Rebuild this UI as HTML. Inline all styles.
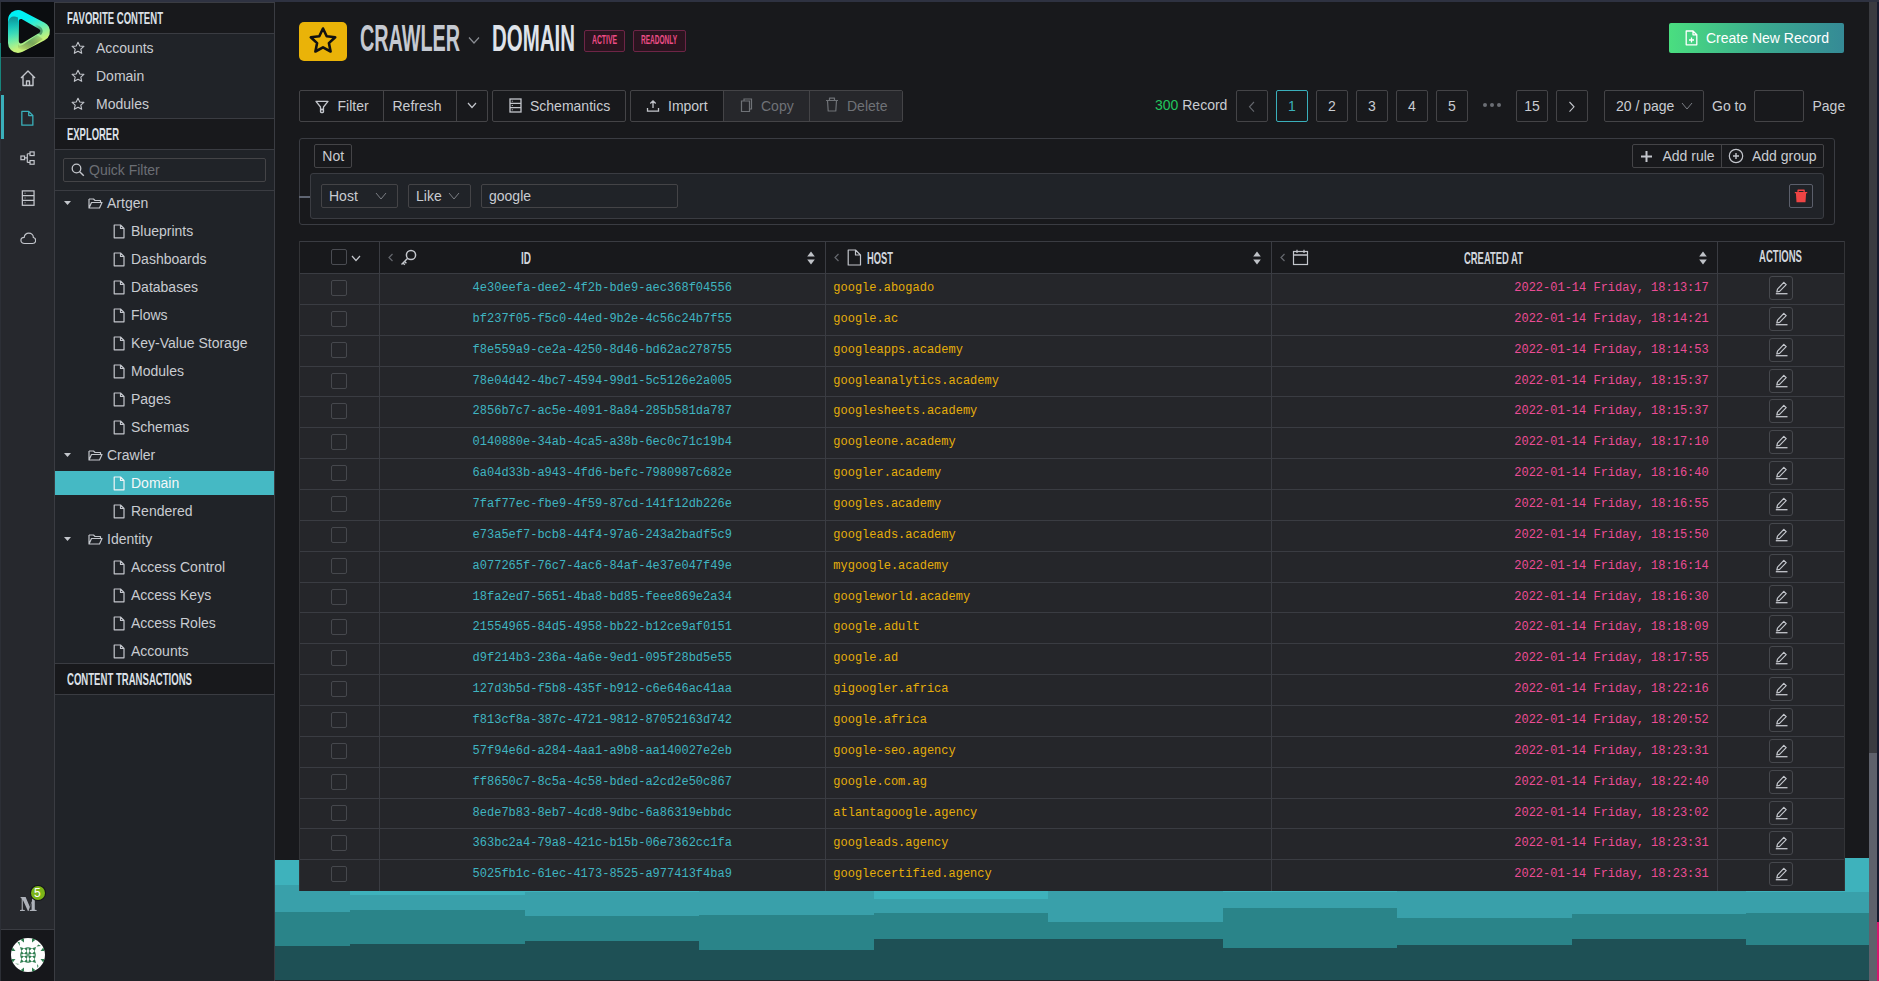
<!DOCTYPE html>
<html><head><meta charset="utf-8"><style>
html,body{margin:0;padding:0;}
body{width:1879px;height:981px;overflow:hidden;position:relative;background:#18191c;font-family:"Liberation Sans",sans-serif;}
.r{position:absolute;box-sizing:content-box;}
.t{position:absolute;white-space:nowrap;}
</style></head><body>
<div class="r" style="left:0px;top:0px;width:1879px;height:2px;background:#2e3241"></div>
<div class="r" style="left:0px;top:2px;width:54px;height:979px;background:#26282d"></div>
<div class="r" style="left:0px;top:2px;width:1px;height:979px;background:#2c2f36"></div>
<div class="r" style="left:0px;top:43px;width:1px;height:48px;background:#17857c"></div>
<div class="r" style="left:54px;top:2px;width:1px;height:979px;background:#3a3c42"></div>
<div class="r" style="left:1px;top:2px;width:53px;height:55px;background:#0b0d10"></div>
<div class="r" style="left:1px;top:57px;width:53px;height:1px;background:#3a3c42"></div>
<div class="r" style="left:1px;top:95px;width:3px;height:44px;background:#3ab0bb"></div>
<div class="r" style="left:1px;top:929px;width:53px;height:1px;background:#3a3c42"></div>
<div class="r" style="left:1px;top:930px;width:53px;height:51px;background:#16171b"></div>
<svg class="r" style="left:1px;top:2px;" width="53" height="55" viewBox="0 0 53 55" fill="none">
<defs>
<linearGradient id="lgA" x1="0.25" y1="0" x2="0.65" y2="1">
<stop offset="0" stop-color="#00f0f4"/><stop offset="0.5" stop-color="#62eeb4"/><stop offset="1" stop-color="#c6f27a"/></linearGradient>
<linearGradient id="lgL" x1="0" y1="0" x2="0" y2="1">
<stop offset="0" stop-color="#0e7f86" stop-opacity="0.9"/><stop offset="0.6" stop-color="#2fb59a" stop-opacity="0.35"/><stop offset="1" stop-color="#60e0a0" stop-opacity="0"/></linearGradient>
<linearGradient id="lgT" x1="0" y1="0" x2="1" y2="0.6">
<stop offset="0" stop-color="#000" stop-opacity="0"/><stop offset="0.55" stop-color="#000" stop-opacity="0"/><stop offset="1" stop-color="#1d5a48" stop-opacity="0.55"/></linearGradient>
<linearGradient id="lgB" x1="1" y1="0" x2="0" y2="1">
<stop offset="0" stop-color="#000" stop-opacity="0"/><stop offset="0.5" stop-color="#2b5e3a" stop-opacity="0.5"/><stop offset="1" stop-color="#000" stop-opacity="0"/></linearGradient>
</defs>
<path d="M17 18 L17 41 L39 29.5 Z" fill="url(#lgA)" stroke="url(#lgA)" stroke-width="20" stroke-linejoin="round"/>
<path d="M7 20 C 8 15 12 13 17 15.5 L17 43 C 12 44 8 42 7 37 Z" fill="url(#lgL)"/>
<path d="M25 17 L38 24 C 42 26 43 30 40 33 L 36 31 C 38 28 36 26 33 25 Z" fill="url(#lgT)"/>
<path d="M36 33 L23 42 C 20 44 17 45 17 41 L 17 46 C 20 49 25 48 30 45 L 42 37 Z" fill="url(#lgB)"/>
<path d="M17.8 19.5 C 17.8 17.3 19.5 16.5 21.5 17.5 L38 27 C 39.8 28 39.8 30 38 31 L21.5 41 C 19.5 42 17.8 41.2 17.8 39 Z" fill="#0b0d10"/>
</svg>
<svg class="r" style="left:19px;top:69px;" width="18" height="18" viewBox="0 0 18 18" fill="none"><path d="M2 9 L9 2 L16 9 M4 7.5 V16.5 H14 V7.5 M7.5 16.5 V12 H10.5 V16.5" stroke="#c3c6cc" stroke-width="1.4" stroke-linejoin="round"/></svg>
<svg class="r" style="left:20.4px;top:109.6px;" width="14.7" height="16.6" viewBox="0 0 16 18" fill="none"><path d="M2 1.5 H9.5 L14 6 V16.5 H2 Z M9.5 1.5 V6 H14" stroke="#3ab0bb" stroke-width="1.4" stroke-linejoin="round"/></svg>
<svg class="r" style="left:20.1px;top:151.1px;" width="15.5" height="14.6" viewBox="0 0 17 16" fill="none"><rect x="1" y="5.5" width="4" height="4" stroke="#c3c6cc" stroke-width="1.3"/><rect x="11" y="1" width="4.5" height="4" stroke="#c3c6cc" stroke-width="1.3"/><rect x="11" y="10.5" width="4.5" height="4" stroke="#c3c6cc" stroke-width="1.3"/><path d="M5 7.5 H8 M8 3 V12.5 M8 3 H11 M8 12.5 H11" stroke="#c3c6cc" stroke-width="1.3"/></svg>
<svg class="r" style="left:20.7px;top:189.7px;" width="14.4" height="16.2" viewBox="0 0 16 18" fill="none"><rect x="1.5" y="1" width="13" height="16" stroke="#c3c6cc" stroke-width="1.4"/><path d="M1.5 6.3 H14.5 M1.5 11.6 H14.5" stroke="#c3c6cc" stroke-width="1.4"/><path d="M4 3.6 H5 M4 8.9 H5 M4 14.2 H5" stroke="#c3c6cc" stroke-width="1"/></svg>
<svg class="r" style="left:19.5px;top:232px;" width="16.6" height="12.9" viewBox="0 0 18 14" fill="none"><path d="M5 12.5 C 2.5 12.5 1 11 1 9 C 1 7 2.5 5.8 4.5 5.8 C 5 3 7 1.3 9.5 1.3 C 12.5 1.3 14.5 3.5 14.5 6 C 16 6.3 17 7.5 17 9.2 C 17 11.2 15.5 12.5 13.5 12.5 Z" stroke="#c3c6cc" stroke-width="1.3"/></svg>
<svg class="r" style="left:19.5px;top:896.5px;" width="17" height="14" viewBox="0 0 17 14" fill="none"><path d="M0.6 0 H5.6 L10 10.2 L12 4 V0 H16.2 V1.1 L14.8 1.3 V12.7 L16.6 12.9 V14 H9.8 V12.9 L11.6 12.7 V4.5 L8.6 14 H7.9 L2.8 2.8 V12.7 L4.8 12.9 V14 H0 V12.9 L1.7 12.7 V1.5 L0.6 1.1 Z" fill="#aeb2ba"/></svg>
<div class="r" style="left:30.6px;top:885.5px;width:14.5px;height:14.5px;border-radius:50%;background:#7cb518;box-shadow:0 0 0 1px #15161a;color:#fff;font-size:12px;line-height:14px;text-align:center;"><span style="position:relative;left:-0.6px;top:0.2px">5</span></div>
<svg class="r" style="left:8px;top:935px;" width="40" height="40" viewBox="0 0 40 40" fill="none">
<defs><clipPath id="avc"><circle cx="20" cy="20" r="17"/></clipPath></defs>
<circle cx="20" cy="20" r="17" fill="#fdfdfd"/>
<g clip-path="url(#avc)" fill="#2e7d4f"><path d="M12 12 L16 13.2 L13.2 16 Z M20 12 L16 13.2 L18.8 16 Z M12 20 L16 18.8 L13.2 16 Z M20 20 L16 18.8 L18.8 16 Z M20 12 L24 13.2 L21.2 16 Z M28 12 L24 13.2 L26.8 16 Z M20 20 L24 18.8 L21.2 16 Z M28 20 L24 18.8 L26.8 16 Z M12 20 L16 21.2 L13.2 24 Z M20 20 L16 21.2 L18.8 24 Z M12 28 L16 26.8 L13.2 24 Z M20 28 L16 26.8 L18.8 24 Z M20 20 L24 21.2 L21.2 24 Z M28 20 L24 21.2 L26.8 24 Z M20 28 L24 26.8 L21.2 24 Z M28 28 L24 26.8 L26.8 24 Z M9 2 L16 2 L16 7.5 Z M24 2 L31 2 L24 7.5 Z M9 38 L16 38 L16 32.5 Z M24 38 L31 38 L24 32.5 Z M2 9 L2 16 L7.5 16 Z M2 24 L2 31 L7.5 24 Z M38 9 L38 16 L32.5 16 Z M38 24 L38 31 L32.5 24 Z M9.5 7 L11.5 7 L12 11 Z M30.5 9.5 L33 11 L28.5 11.5 Z M7 28.5 L9.5 29.5 L11.5 29 Z M29 29 L29.5 33 L30.5 31 Z"/></g>
</svg>
<div class="r" style="left:55px;top:2px;width:219px;height:979px;background:#202328"></div>
<div class="r" style="left:274px;top:2px;width:1px;height:979px;background:#3a3c42"></div>
<div class="r" style="left:55px;top:2px;width:219px;height:31px;background:#18191c"></div>
<div class="r" style="left:55px;top:2px;width:219px;height:1px;background:#3a3c42"></div>
<div class="r" style="left:55px;top:33px;width:219px;height:1px;background:#3a3c42"></div>
<div class="t" style="left:67px;top:9.61px;font-size:17px;line-height:17px;color:#dde1e8;font-weight:bold;transform:scaleX(0.5625);transform-origin:0 0;">FAVORITE CONTENT</div>
<svg class="r" style="left:71px;top:41px;" width="14" height="14" viewBox="0 0 14 14" fill="none"><path d="M7 1.2 L8.8 5 L12.9 5.4 L9.8 8.2 L10.7 12.3 L7 10.2 L3.3 12.3 L4.2 8.2 L1.1 5.4 L5.2 5 Z" stroke="#c3c6cc" stroke-width="1.1" stroke-linejoin="round"/></svg>
<div class="t" style="left:96px;top:41.15px;font-size:14px;line-height:14px;color:#c9ccd1;font-family:'Liberation Sans',sans-serif;font-weight:normal;">Accounts</div>
<svg class="r" style="left:71px;top:69px;" width="14" height="14" viewBox="0 0 14 14" fill="none"><path d="M7 1.2 L8.8 5 L12.9 5.4 L9.8 8.2 L10.7 12.3 L7 10.2 L3.3 12.3 L4.2 8.2 L1.1 5.4 L5.2 5 Z" stroke="#c3c6cc" stroke-width="1.1" stroke-linejoin="round"/></svg>
<div class="t" style="left:96px;top:69.15px;font-size:14px;line-height:14px;color:#c9ccd1;font-family:'Liberation Sans',sans-serif;font-weight:normal;">Domain</div>
<svg class="r" style="left:71px;top:97px;" width="14" height="14" viewBox="0 0 14 14" fill="none"><path d="M7 1.2 L8.8 5 L12.9 5.4 L9.8 8.2 L10.7 12.3 L7 10.2 L3.3 12.3 L4.2 8.2 L1.1 5.4 L5.2 5 Z" stroke="#c3c6cc" stroke-width="1.1" stroke-linejoin="round"/></svg>
<div class="t" style="left:96px;top:97.15px;font-size:14px;line-height:14px;color:#c9ccd1;font-family:'Liberation Sans',sans-serif;font-weight:normal;">Modules</div>
<div class="r" style="left:55px;top:118px;width:219px;height:1px;background:#3a3c42"></div>
<div class="r" style="left:55px;top:119px;width:219px;height:30px;background:#18191c"></div>
<div class="r" style="left:55px;top:149px;width:219px;height:1px;background:#3a3c42"></div>
<div class="t" style="left:67px;top:125.61px;font-size:17px;line-height:17px;color:#dde1e8;font-weight:bold;transform:scaleX(0.5559);transform-origin:0 0;">EXPLORER</div>
<div class="r" style="left:63px;top:158px;width:201px;height:22px;border:1px solid #444447;border-radius:2px;background:#202328"></div>
<svg class="r" style="left:71px;top:163px;" width="14" height="14" viewBox="0 0 14 14" fill="none"><circle cx="5.5" cy="5.5" r="4.3" stroke="#c3c6cc" stroke-width="1.3"/><path d="M8.7 8.7 L12.8 12.8" stroke="#c3c6cc" stroke-width="1.4"/></svg>
<div class="t" style="left:89px;top:163.15px;font-size:14px;line-height:14px;color:#6b6e74;font-family:'Liberation Sans',sans-serif;font-weight:normal;">Quick Filter</div>
<div class="r" style="left:55px;top:190px;width:219px;height:1px;background:#3a3c42"></div>
<svg class="r" style="left:63.6px;top:200.7px;" width="7" height="4" viewBox="0 0 7 4" fill="none"><path d="M0 0 H7 L3.5 4 Z" fill="#c3c6cc"/></svg>
<svg class="r" style="left:87.5px;top:197px;" width="15" height="12" viewBox="0 0 15 12" fill="none"><path d="M1 2 H5.5 L7 3.5 H12.5 V5.5 M1 2 V11 H11.5 L14 5.5 H3.5 L1 11" stroke="#c3c6cc" stroke-width="1.2" stroke-linejoin="round"/></svg>
<div class="t" style="left:107px;top:196.15px;font-size:14px;line-height:14px;color:#c9ccd1;font-family:'Liberation Sans',sans-serif;font-weight:normal;">Artgen</div>
<svg class="r" style="left:113px;top:224px;" width="12" height="15" viewBox="0 0 12 15" fill="none"><path d="M1.2 1 H7.5 L11 4.5 V13.8 H1.2 Z M7.5 1 V4.5 H11" stroke="#c3c6cc" stroke-width="1.2" stroke-linejoin="round"/></svg>
<div class="t" style="left:131px;top:224.15px;font-size:14px;line-height:14px;color:#c9ccd1;font-family:'Liberation Sans',sans-serif;font-weight:normal;">Blueprints</div>
<svg class="r" style="left:113px;top:252px;" width="12" height="15" viewBox="0 0 12 15" fill="none"><path d="M1.2 1 H7.5 L11 4.5 V13.8 H1.2 Z M7.5 1 V4.5 H11" stroke="#c3c6cc" stroke-width="1.2" stroke-linejoin="round"/></svg>
<div class="t" style="left:131px;top:252.15px;font-size:14px;line-height:14px;color:#c9ccd1;font-family:'Liberation Sans',sans-serif;font-weight:normal;">Dashboards</div>
<svg class="r" style="left:113px;top:280px;" width="12" height="15" viewBox="0 0 12 15" fill="none"><path d="M1.2 1 H7.5 L11 4.5 V13.8 H1.2 Z M7.5 1 V4.5 H11" stroke="#c3c6cc" stroke-width="1.2" stroke-linejoin="round"/></svg>
<div class="t" style="left:131px;top:280.15px;font-size:14px;line-height:14px;color:#c9ccd1;font-family:'Liberation Sans',sans-serif;font-weight:normal;">Databases</div>
<svg class="r" style="left:113px;top:308px;" width="12" height="15" viewBox="0 0 12 15" fill="none"><path d="M1.2 1 H7.5 L11 4.5 V13.8 H1.2 Z M7.5 1 V4.5 H11" stroke="#c3c6cc" stroke-width="1.2" stroke-linejoin="round"/></svg>
<div class="t" style="left:131px;top:308.15px;font-size:14px;line-height:14px;color:#c9ccd1;font-family:'Liberation Sans',sans-serif;font-weight:normal;">Flows</div>
<svg class="r" style="left:113px;top:336px;" width="12" height="15" viewBox="0 0 12 15" fill="none"><path d="M1.2 1 H7.5 L11 4.5 V13.8 H1.2 Z M7.5 1 V4.5 H11" stroke="#c3c6cc" stroke-width="1.2" stroke-linejoin="round"/></svg>
<div class="t" style="left:131px;top:336.15px;font-size:14px;line-height:14px;color:#c9ccd1;font-family:'Liberation Sans',sans-serif;font-weight:normal;">Key-Value Storage</div>
<svg class="r" style="left:113px;top:364px;" width="12" height="15" viewBox="0 0 12 15" fill="none"><path d="M1.2 1 H7.5 L11 4.5 V13.8 H1.2 Z M7.5 1 V4.5 H11" stroke="#c3c6cc" stroke-width="1.2" stroke-linejoin="round"/></svg>
<div class="t" style="left:131px;top:364.15px;font-size:14px;line-height:14px;color:#c9ccd1;font-family:'Liberation Sans',sans-serif;font-weight:normal;">Modules</div>
<svg class="r" style="left:113px;top:392px;" width="12" height="15" viewBox="0 0 12 15" fill="none"><path d="M1.2 1 H7.5 L11 4.5 V13.8 H1.2 Z M7.5 1 V4.5 H11" stroke="#c3c6cc" stroke-width="1.2" stroke-linejoin="round"/></svg>
<div class="t" style="left:131px;top:392.15px;font-size:14px;line-height:14px;color:#c9ccd1;font-family:'Liberation Sans',sans-serif;font-weight:normal;">Pages</div>
<svg class="r" style="left:113px;top:420px;" width="12" height="15" viewBox="0 0 12 15" fill="none"><path d="M1.2 1 H7.5 L11 4.5 V13.8 H1.2 Z M7.5 1 V4.5 H11" stroke="#c3c6cc" stroke-width="1.2" stroke-linejoin="round"/></svg>
<div class="t" style="left:131px;top:420.15px;font-size:14px;line-height:14px;color:#c9ccd1;font-family:'Liberation Sans',sans-serif;font-weight:normal;">Schemas</div>
<svg class="r" style="left:63.6px;top:452.7px;" width="7" height="4" viewBox="0 0 7 4" fill="none"><path d="M0 0 H7 L3.5 4 Z" fill="#c3c6cc"/></svg>
<svg class="r" style="left:87.5px;top:449px;" width="15" height="12" viewBox="0 0 15 12" fill="none"><path d="M1 2 H5.5 L7 3.5 H12.5 V5.5 M1 2 V11 H11.5 L14 5.5 H3.5 L1 11" stroke="#c3c6cc" stroke-width="1.2" stroke-linejoin="round"/></svg>
<div class="t" style="left:107px;top:448.15px;font-size:14px;line-height:14px;color:#c9ccd1;font-family:'Liberation Sans',sans-serif;font-weight:normal;">Crawler</div>
<div class="r" style="left:55px;top:471px;width:219px;height:24px;background:#45b9c4"></div>
<svg class="r" style="left:113px;top:476px;" width="12" height="15" viewBox="0 0 12 15" fill="none"><path d="M1.2 1 H7.5 L11 4.5 V13.8 H1.2 Z M7.5 1 V4.5 H11" stroke="#f2f5f6" stroke-width="1.2" stroke-linejoin="round"/></svg>
<div class="t" style="left:131px;top:476.15px;font-size:14px;line-height:14px;color:#f4f7f8;font-family:'Liberation Sans',sans-serif;font-weight:normal;">Domain</div>
<svg class="r" style="left:113px;top:504px;" width="12" height="15" viewBox="0 0 12 15" fill="none"><path d="M1.2 1 H7.5 L11 4.5 V13.8 H1.2 Z M7.5 1 V4.5 H11" stroke="#c3c6cc" stroke-width="1.2" stroke-linejoin="round"/></svg>
<div class="t" style="left:131px;top:504.15px;font-size:14px;line-height:14px;color:#c9ccd1;font-family:'Liberation Sans',sans-serif;font-weight:normal;">Rendered</div>
<svg class="r" style="left:63.6px;top:536.7px;" width="7" height="4" viewBox="0 0 7 4" fill="none"><path d="M0 0 H7 L3.5 4 Z" fill="#c3c6cc"/></svg>
<svg class="r" style="left:87.5px;top:533px;" width="15" height="12" viewBox="0 0 15 12" fill="none"><path d="M1 2 H5.5 L7 3.5 H12.5 V5.5 M1 2 V11 H11.5 L14 5.5 H3.5 L1 11" stroke="#c3c6cc" stroke-width="1.2" stroke-linejoin="round"/></svg>
<div class="t" style="left:107px;top:532.15px;font-size:14px;line-height:14px;color:#c9ccd1;font-family:'Liberation Sans',sans-serif;font-weight:normal;">Identity</div>
<svg class="r" style="left:113px;top:560px;" width="12" height="15" viewBox="0 0 12 15" fill="none"><path d="M1.2 1 H7.5 L11 4.5 V13.8 H1.2 Z M7.5 1 V4.5 H11" stroke="#c3c6cc" stroke-width="1.2" stroke-linejoin="round"/></svg>
<div class="t" style="left:131px;top:560.15px;font-size:14px;line-height:14px;color:#c9ccd1;font-family:'Liberation Sans',sans-serif;font-weight:normal;">Access Control</div>
<svg class="r" style="left:113px;top:588px;" width="12" height="15" viewBox="0 0 12 15" fill="none"><path d="M1.2 1 H7.5 L11 4.5 V13.8 H1.2 Z M7.5 1 V4.5 H11" stroke="#c3c6cc" stroke-width="1.2" stroke-linejoin="round"/></svg>
<div class="t" style="left:131px;top:588.15px;font-size:14px;line-height:14px;color:#c9ccd1;font-family:'Liberation Sans',sans-serif;font-weight:normal;">Access Keys</div>
<svg class="r" style="left:113px;top:616px;" width="12" height="15" viewBox="0 0 12 15" fill="none"><path d="M1.2 1 H7.5 L11 4.5 V13.8 H1.2 Z M7.5 1 V4.5 H11" stroke="#c3c6cc" stroke-width="1.2" stroke-linejoin="round"/></svg>
<div class="t" style="left:131px;top:616.15px;font-size:14px;line-height:14px;color:#c9ccd1;font-family:'Liberation Sans',sans-serif;font-weight:normal;">Access Roles</div>
<svg class="r" style="left:113px;top:644px;" width="12" height="15" viewBox="0 0 12 15" fill="none"><path d="M1.2 1 H7.5 L11 4.5 V13.8 H1.2 Z M7.5 1 V4.5 H11" stroke="#c3c6cc" stroke-width="1.2" stroke-linejoin="round"/></svg>
<div class="t" style="left:131px;top:644.15px;font-size:14px;line-height:14px;color:#c9ccd1;font-family:'Liberation Sans',sans-serif;font-weight:normal;">Accounts</div>
<div class="r" style="left:55px;top:663px;width:219px;height:1px;background:#3a3c42"></div>
<div class="r" style="left:55px;top:664px;width:219px;height:30px;background:#18191c"></div>
<div class="r" style="left:55px;top:694px;width:219px;height:1px;background:#3a3c42"></div>
<div class="t" style="left:67px;top:670.61px;font-size:17px;line-height:17px;color:#dde1e8;font-weight:bold;transform:scaleX(0.5631);transform-origin:0 0;">CONTENT TRANSACTIONS</div>
<div class="r" style="left:275px;top:860px;width:75px;height:121px;background:#3eb2bc"></div>
<div class="r" style="left:275px;top:885px;width:75px;height:96px;background:#39a0aa"></div>
<div class="r" style="left:275px;top:912px;width:75px;height:69px;background:#2a8489"></div>
<div class="r" style="left:275px;top:946px;width:75px;height:35px;background:#1e5055"></div>
<div class="r" style="left:350px;top:858px;width:175px;height:123px;background:#3eb2bc"></div>
<div class="r" style="left:350px;top:895px;width:175px;height:86px;background:#39a0aa"></div>
<div class="r" style="left:350px;top:910px;width:175px;height:71px;background:#2a8489"></div>
<div class="r" style="left:350px;top:944px;width:175px;height:37px;background:#1e5055"></div>
<div class="r" style="left:525px;top:858px;width:174px;height:123px;background:#3eb2bc"></div>
<div class="r" style="left:525px;top:892px;width:174px;height:89px;background:#39a0aa"></div>
<div class="r" style="left:525px;top:916px;width:174px;height:65px;background:#2a8489"></div>
<div class="r" style="left:525px;top:941px;width:174px;height:40px;background:#1e5055"></div>
<div class="r" style="left:699px;top:858px;width:175px;height:123px;background:#3eb2bc"></div>
<div class="r" style="left:699px;top:889px;width:175px;height:92px;background:#39a0aa"></div>
<div class="r" style="left:699px;top:915px;width:175px;height:66px;background:#2a8489"></div>
<div class="r" style="left:699px;top:950px;width:175px;height:31px;background:#1e5055"></div>
<div class="r" style="left:874px;top:858px;width:174px;height:123px;background:#3eb2bc"></div>
<div class="r" style="left:874px;top:899px;width:174px;height:82px;background:#39a0aa"></div>
<div class="r" style="left:874px;top:913px;width:174px;height:68px;background:#2a8489"></div>
<div class="r" style="left:874px;top:939px;width:174px;height:42px;background:#1e5055"></div>
<div class="r" style="left:1048px;top:858px;width:175px;height:123px;background:#3eb2bc"></div>
<div class="r" style="left:1048px;top:889px;width:175px;height:92px;background:#39a0aa"></div>
<div class="r" style="left:1048px;top:922px;width:175px;height:59px;background:#2a8489"></div>
<div class="r" style="left:1048px;top:939px;width:175px;height:42px;background:#1e5055"></div>
<div class="r" style="left:1223px;top:858px;width:174px;height:123px;background:#3eb2bc"></div>
<div class="r" style="left:1223px;top:892px;width:174px;height:89px;background:#39a0aa"></div>
<div class="r" style="left:1223px;top:908px;width:174px;height:73px;background:#2a8489"></div>
<div class="r" style="left:1223px;top:948px;width:174px;height:33px;background:#1e5055"></div>
<div class="r" style="left:1397px;top:858px;width:175px;height:123px;background:#3eb2bc"></div>
<div class="r" style="left:1397px;top:889px;width:175px;height:92px;background:#39a0aa"></div>
<div class="r" style="left:1397px;top:918px;width:175px;height:63px;background:#2a8489"></div>
<div class="r" style="left:1397px;top:945px;width:175px;height:36px;background:#1e5055"></div>
<div class="r" style="left:1572px;top:858px;width:174px;height:123px;background:#3eb2bc"></div>
<div class="r" style="left:1572px;top:889px;width:174px;height:92px;background:#39a0aa"></div>
<div class="r" style="left:1572px;top:914px;width:174px;height:67px;background:#2a8489"></div>
<div class="r" style="left:1572px;top:939px;width:174px;height:42px;background:#1e5055"></div>
<div class="r" style="left:1746px;top:858px;width:123px;height:123px;background:#3eb2bc"></div>
<div class="r" style="left:1746px;top:892px;width:123px;height:89px;background:#39a0aa"></div>
<div class="r" style="left:1746px;top:913px;width:123px;height:68px;background:#2a8489"></div>
<div class="r" style="left:1746px;top:945px;width:123px;height:36px;background:#1e5055"></div>
<div class="r" style="left:275px;top:980px;width:1594px;height:1px;background:#202328"></div>
<div class="r" style="left:1869px;top:2px;width:8px;height:979px;background:#3a3b40"></div>
<div class="r" style="left:1869px;top:753px;width:8px;height:228px;background:#5e616b"></div>
<div class="r" style="left:1877px;top:2px;width:2px;height:979px;background:#161a2e"></div>
<div class="r" style="left:1877px;top:922px;width:2px;height:59px;background:#d6156e"></div>
<div class="r" style="left:299px;top:22px;width:48px;height:39px;border-radius:5px;background:#eab308"></div>
<svg class="r" style="left:308px;top:26px;" width="30" height="30" viewBox="0 0 30 30" fill="none"><path d="M15 2.5 L18.7 10.3 L27.2 11.3 L20.9 17.1 L22.6 25.5 L15 21.3 L7.4 25.5 L9.1 17.1 L2.8 11.3 L11.3 10.3 Z" stroke="#111" stroke-width="2.6" stroke-linejoin="round"/></svg>
<div class="t" style="left:360px;top:19.67px;font-size:37px;line-height:37px;color:#c5c9d1;font-weight:bold;transform:scaleX(0.5347);transform-origin:0 0;">CRAWLER</div>
<svg class="r" style="left:468px;top:36px;" width="12" height="9" viewBox="0 0 12 9" fill="none"><path d="M1 1.5 L6 7 L11 1.5" stroke="#8a8d93" stroke-width="1.2"/></svg>
<div class="t" style="left:492px;top:19.67px;font-size:37px;line-height:37px;color:#dfe3ea;font-weight:bold;transform:scaleX(0.5532);transform-origin:0 0;">DOMAIN</div>
<div class="r" style="left:584px;top:30px;width:39px;height:20px;border:1px solid #6e2546;border-radius:2px;background:#2a141f"></div>
<div class="t" style="left:592px;top:32.99px;font-size:13px;line-height:13px;color:#ec4c86;font-weight:bold;transform:scaleX(0.5244);transform-origin:0 0;">ACTIVE</div>
<div class="r" style="left:633px;top:30px;width:51px;height:20px;border:1px solid #6e2546;border-radius:2px;background:#2a141f"></div>
<div class="t" style="left:641px;top:32.99px;font-size:13px;line-height:13px;color:#ec4c86;font-weight:bold;transform:scaleX(0.5016);transform-origin:0 0;">READONLY</div>
<div class="r" style="left:1669px;top:23px;width:175px;height:30px;border-radius:2px;background:linear-gradient(90deg,#4ade80 0%,#3aa98f 55%,#358a96 100%)"></div>
<svg class="r" style="left:1685px;top:30px;" width="13" height="16" viewBox="0 0 13 16" fill="none"><path d="M1.2 1 H8 L11.8 4.8 V14.8 H1.2 Z M8 1 V4.8 H11.8 M6.5 7.5 V12.5 M4 10 H9" stroke="#fff" stroke-width="1.3" stroke-linejoin="round"/></svg>
<div class="t" style="left:1706px;top:31.15px;font-size:14px;line-height:14px;color:#ffffff;font-family:'Liberation Sans',sans-serif;font-weight:normal;">Create New Record</div>
<div class="r" style="left:299px;top:90px;width:187px;height:30px;border:1px solid #444447;border-radius:2px;background:#18191c"></div>
<div class="r" style="left:383px;top:91px;width:1px;height:30px;background:#444447"></div>
<div class="r" style="left:456px;top:91px;width:1px;height:30px;background:#444447"></div>
<svg class="r" style="left:315px;top:99.5px;" width="14" height="14" viewBox="0 0 14 14" fill="none"><path d="M1 1.3 H13 L8.5 7 V9.5 H5.5 V7 Z" stroke="#c3c6cc" stroke-width="1.3" stroke-linejoin="round"/><rect x="5.5" y="9.5" width="3" height="3" rx="0.8" stroke="#c3c6cc" stroke-width="1.3"/></svg>
<div class="t" style="left:337.5px;top:99.15px;font-size:14px;line-height:14px;color:#c9ccd1;font-family:'Liberation Sans',sans-serif;font-weight:normal;">Filter</div>
<div class="t" style="left:392.5px;top:99.15px;font-size:14px;line-height:14px;color:#c9ccd1;font-family:'Liberation Sans',sans-serif;font-weight:normal;">Refresh</div>
<svg class="r" style="left:467px;top:102px;" width="10" height="7" viewBox="0 0 10 7" fill="none"><path d="M1 1 L5 5.5 L9 1" stroke="#c3c6cc" stroke-width="1.2"/></svg>
<div class="r" style="left:492px;top:90px;width:132px;height:30px;border:1px solid #444447;border-radius:2px;background:#18191c"></div>
<svg class="r" style="left:509px;top:98px;" width="13" height="15" viewBox="0 0 13 15" fill="none"><rect x="1" y="1" width="11" height="13" stroke="#c3c6cc" stroke-width="1.3"/><path d="M1 5.3 H12 M1 9.7 H12" stroke="#c3c6cc" stroke-width="1.3"/><path d="M2.8 3.2 H3.8 M2.8 7.5 H3.8 M2.8 11.8 H3.8" stroke="#c3c6cc" stroke-width="1"/></svg>
<div class="t" style="left:530px;top:99.15px;font-size:14px;line-height:14px;color:#c9ccd1;font-family:'Liberation Sans',sans-serif;font-weight:normal;">Schemantics</div>
<div class="r" style="left:630px;top:90px;width:271px;height:30px;border:1px solid #444447;border-radius:2px;background:#18191c"></div>
<div class="r" style="left:723px;top:91px;width:86px;height:30px;background:#26272b"></div>
<div class="r" style="left:810px;top:91px;width:92px;height:30px;background:#26272b;border-radius:0 2px 2px 0"></div>
<div class="r" style="left:723px;top:91px;width:1px;height:30px;background:#444447"></div>
<div class="r" style="left:809px;top:91px;width:1px;height:30px;background:#444447"></div>
<svg class="r" style="left:646px;top:99px;" width="14" height="14" viewBox="0 0 14 14" fill="none"><path d="M7 1.8 V9 M4.3 4.5 L7 1.8 L9.7 4.5 M1.5 9 V12.2 H12.5 V9" stroke="#c3c6cc" stroke-width="1.3"/></svg>
<div class="t" style="left:668px;top:99.15px;font-size:14px;line-height:14px;color:#c9ccd1;font-family:'Liberation Sans',sans-serif;font-weight:normal;">Import</div>
<svg class="r" style="left:740px;top:98px;" width="13" height="15" viewBox="0 0 13 15" fill="none"><path d="M4 3 V1 H11.5 V11 H9.5 M1.5 3 H9.5 V13.5 H1.5 Z" stroke="#6f7277" stroke-width="1.2"/></svg>
<div class="t" style="left:761px;top:99.15px;font-size:14px;line-height:14px;color:#6f7277;font-family:'Liberation Sans',sans-serif;font-weight:normal;">Copy</div>
<svg class="r" style="left:825px;top:97px;" width="14" height="15" viewBox="0 0 14 15" fill="none"><path d="M1 3.5 H13 M4.5 3.5 V1.2 H9.5 V3.5 M2.5 3.5 L3.2 14 H10.8 L11.5 3.5" stroke="#6f7277" stroke-width="1.2" stroke-linejoin="round"/></svg>
<div class="t" style="left:847px;top:99.15px;font-size:14px;line-height:14px;color:#6f7277;font-family:'Liberation Sans',sans-serif;font-weight:normal;">Delete</div>
<div class="t" style="left:1155px;top:98.15px;font-size:14px;line-height:14px;color:#c9ccd1;font-family:'Liberation Sans',sans-serif;font-weight:normal;"><span style="color:#22c55e">300</span> Record</div>
<div class="r" style="left:1236px;top:90px;width:30px;height:30px;border:1px solid #444447;border-radius:2px;background:#18191c"></div>
<svg class="r" style="left:1248px;top:101px;" width="8" height="12" viewBox="0 0 8 12" fill="none"><path d="M6 1 L1.5 5.8 L6 10.6" stroke="#65686e" stroke-width="1.1"/></svg>
<div class="r" style="left:1276px;top:90px;width:30px;height:30px;border:1px solid #3ab0bb;border-radius:2px;background:#18191c"></div>
<div class="t" style="left:1276px;top:99px;width:32px;text-align:center;font-size:14px;line-height:14px;color:#3ab0bb">1</div>
<div class="r" style="left:1316px;top:90px;width:30px;height:30px;border:1px solid #444447;border-radius:2px;background:#18191c"></div>
<div class="t" style="left:1316px;top:99px;width:32px;text-align:center;font-size:14px;line-height:14px;color:#c9ccd1">2</div>
<div class="r" style="left:1356px;top:90px;width:30px;height:30px;border:1px solid #444447;border-radius:2px;background:#18191c"></div>
<div class="t" style="left:1356px;top:99px;width:32px;text-align:center;font-size:14px;line-height:14px;color:#c9ccd1">3</div>
<div class="r" style="left:1396px;top:90px;width:30px;height:30px;border:1px solid #444447;border-radius:2px;background:#18191c"></div>
<div class="t" style="left:1396px;top:99px;width:32px;text-align:center;font-size:14px;line-height:14px;color:#c9ccd1">4</div>
<div class="r" style="left:1436px;top:90px;width:30px;height:30px;border:1px solid #444447;border-radius:2px;background:#18191c"></div>
<div class="t" style="left:1436px;top:99px;width:32px;text-align:center;font-size:14px;line-height:14px;color:#c9ccd1">5</div>
<div class="r" style="left:1516px;top:90px;width:30px;height:30px;border:1px solid #444447;border-radius:2px;background:#18191c"></div>
<div class="t" style="left:1516px;top:99px;width:32px;text-align:center;font-size:14px;line-height:14px;color:#c9ccd1">15</div>
<div class="r" style="left:1556px;top:90px;width:30px;height:30px;border:1px solid #444447;border-radius:2px;background:#18191c"></div>
<svg class="r" style="left:1568px;top:101px;" width="8" height="12" viewBox="0 0 8 12" fill="none"><path d="M1.5 1 L6 5.8 L1.5 10.6" stroke="#c3c6cc" stroke-width="1.1"/></svg>
<svg class="r" style="left:1482px;top:102px;" width="20" height="6" viewBox="0 0 20 6" fill="none"><circle cx="3" cy="3" r="2" fill="#6b6e74"/><circle cx="10" cy="3" r="2" fill="#6b6e74"/><circle cx="17" cy="3" r="2" fill="#6b6e74"/></svg>
<div class="r" style="left:1604px;top:90px;width:98px;height:30px;border:1px solid #444447;border-radius:2px;background:#18191c"></div>
<div class="t" style="left:1616px;top:99.15px;font-size:14px;line-height:14px;color:#c9ccd1;font-family:'Liberation Sans',sans-serif;font-weight:normal;">20 / page</div>
<svg class="r" style="left:1681px;top:101.5px;" width="12" height="9" viewBox="0 0 12 9" fill="none"><path d="M1 1 L6 7 L11 1" stroke="#7b7e84" stroke-width="1"/></svg>
<div class="t" style="left:1712px;top:99.15px;font-size:14px;line-height:14px;color:#c9ccd1;font-family:'Liberation Sans',sans-serif;font-weight:normal;">Go to</div>
<div class="r" style="left:1754px;top:90px;width:48px;height:30px;border:1px solid #444447;border-radius:2px;background:#18191c"></div>
<div class="t" style="left:1812.5px;top:99.15px;font-size:14px;line-height:14px;color:#c9ccd1;font-family:'Liberation Sans',sans-serif;font-weight:normal;">Page</div>
<div class="r" style="left:299px;top:138px;width:1534px;height:85px;border:1px solid #3a3c42;border-radius:3px"></div>
<div class="r" style="left:314px;top:144px;width:36px;height:22px;border:1px solid #444447;border-radius:2px;background:#18191c"></div>
<div class="t" style="left:322.3px;top:149.15px;font-size:14px;line-height:14px;color:#c9ccd1;font-family:'Liberation Sans',sans-serif;font-weight:normal;">Not</div>
<div class="r" style="left:1632px;top:144px;width:190px;height:22px;border:1px solid #444447;border-radius:2px;background:#18191c"></div>
<div class="r" style="left:1721px;top:145px;width:1px;height:22px;background:#444447"></div>
<svg class="r" style="left:1640px;top:149.5px;" width="13" height="13" viewBox="0 0 13 13" fill="none"><path d="M6.5 1 V12 M1 6.5 H12" stroke="#c3c6cc" stroke-width="2"/></svg>
<div class="t" style="left:1662.5px;top:149.15px;font-size:14px;line-height:14px;color:#c9ccd1;font-family:'Liberation Sans',sans-serif;font-weight:normal;">Add rule</div>
<svg class="r" style="left:1728px;top:148px;" width="16" height="16" viewBox="0 0 16 16" fill="none"><circle cx="8" cy="8" r="6.7" stroke="#c3c6cc" stroke-width="1.2"/><path d="M8 5 V11 M5 8 H11" stroke="#c3c6cc" stroke-width="1.4"/></svg>
<div class="t" style="left:1752px;top:149.15px;font-size:14px;line-height:14px;color:#c9ccd1;font-family:'Liberation Sans',sans-serif;font-weight:normal;">Add group</div>
<div class="r" style="left:310px;top:173px;width:1512px;height:44px;border:1px solid #3a3c42;border-radius:3px;background:#202328"></div>
<div class="r" style="left:299px;top:196px;width:11px;height:2px;background:#5f6572"></div>
<div class="r" style="left:321px;top:184px;width:75px;height:22px;border:1px solid #444447;border-radius:2px;background:#202328"></div>
<div class="t" style="left:329px;top:189.15px;font-size:14px;line-height:14px;color:#c9ccd1;font-family:'Liberation Sans',sans-serif;font-weight:normal;">Host</div>
<svg class="r" style="left:375px;top:192px;" width="12" height="9" viewBox="0 0 12 9" fill="none"><path d="M1 1 L6 7 L11 1" stroke="#7b7e84" stroke-width="1"/></svg>
<div class="r" style="left:408px;top:184px;width:61px;height:22px;border:1px solid #444447;border-radius:2px;background:#202328"></div>
<div class="t" style="left:416px;top:189.15px;font-size:14px;line-height:14px;color:#c9ccd1;font-family:'Liberation Sans',sans-serif;font-weight:normal;">Like</div>
<svg class="r" style="left:448px;top:192px;" width="12" height="9" viewBox="0 0 12 9" fill="none"><path d="M1 1 L6 7 L11 1" stroke="#7b7e84" stroke-width="1"/></svg>
<div class="r" style="left:481px;top:184px;width:195px;height:22px;border:1px solid #444447;border-radius:2px;background:#202328"></div>
<div class="t" style="left:489px;top:189.15px;font-size:14px;line-height:14px;color:#c9ccd1;font-family:'Liberation Sans',sans-serif;font-weight:normal;">google</div>
<div class="r" style="left:1789px;top:184px;width:22px;height:22px;border:1px solid #5b5f6b;border-radius:2px;background:#202328"></div>
<svg class="r" style="left:1794px;top:188px;" width="14" height="15" viewBox="0 0 14 15" fill="none"><path d="M3.4 4 V2.3 Q3.4 1.6 4.1 1.6 H10.1 Q10.8 1.6 10.8 2.3 V4 H9.5 V2.9 H4.7 V4 Z M0.8 3.9 H13.2 V5.3 H0.8 Z M1.9 5.3 H12.1 L11.5 14.3 H2.5 Z" fill="#ef4444"/></svg>
<div class="r" style="left:299px;top:241px;width:1546px;height:650px;background:#25262a"></div>
<div class="r" style="left:299px;top:241px;width:1546px;height:32px;background:#18191c"></div>
<div class="r" style="left:299px;top:241px;width:1546px;height:1px;background:#3a3c42"></div>
<div class="r" style="left:299px;top:273px;width:1546px;height:1px;background:#3a3c42"></div>
<div class="r" style="left:299px;top:241px;width:1px;height:650px;background:#333437"></div>
<div class="r" style="left:1844px;top:241px;width:1px;height:650px;background:#333437"></div>
<div class="r" style="left:379px;top:241px;width:1px;height:650px;background:#3a3c42"></div>
<div class="r" style="left:825px;top:241px;width:1px;height:650px;background:#3a3c42"></div>
<div class="r" style="left:1271px;top:241px;width:1px;height:650px;background:#3a3c42"></div>
<div class="r" style="left:1717px;top:241px;width:1px;height:650px;background:#3a3c42"></div>
<div class="r" style="left:331px;top:249px;width:14px;height:14px;border:1px solid #4a4c52;border-radius:2px"></div>
<svg class="r" style="left:351px;top:255px;" width="10" height="7" viewBox="0 0 10 7" fill="none"><path d="M1 1 L5 5.5 L9 1" stroke="#c3c6cc" stroke-width="1.2"/></svg>
<svg class="r" style="left:388px;top:253px;" width="6" height="9" viewBox="0 0 6 9" fill="none"><path d="M4.5 1 L1 4.5 L4.5 8" stroke="#65686e" stroke-width="1.2"/></svg>
<svg class="r" style="left:400px;top:249px;" width="17" height="17" viewBox="0 0 17 17" fill="none"><circle cx="11" cy="6" r="4.6" stroke="#c3c6cc" stroke-width="1.5"/><path d="M7.7 9.3 L1.5 15.5 M3 14 L4.8 15.8 M4.6 12.4 L6.4 14.2" stroke="#c3c6cc" stroke-width="1.4"/></svg>
<div class="t" style="left:521px;top:249.61px;font-size:17px;line-height:17px;color:#d2d6dd;font-weight:bold;transform:scaleX(0.5882);transform-origin:0 0;">ID</div>
<svg class="r" style="left:807px;top:251px;" width="8" height="14" viewBox="0 0 8 14" fill="none"><path d="M4 0.5 L7.8 5.5 H0.2 Z M4 13.5 L7.8 8.5 H0.2 Z" fill="#bfc2c7"/></svg>
<svg class="r" style="left:834px;top:253px;" width="6" height="9" viewBox="0 0 6 9" fill="none"><path d="M4.5 1 L1 4.5 L4.5 8" stroke="#65686e" stroke-width="1.2"/></svg>
<svg class="r" style="left:847px;top:249px;" width="15" height="17" viewBox="0 0 15 17" fill="none"><path d="M1.2 1 H8.5 L13.5 6 V16 H1.2 Z M8.5 1 V6 H13.5" stroke="#c3c6cc" stroke-width="1.2" stroke-linejoin="round"/></svg>
<div class="t" style="left:867px;top:249.61px;font-size:17px;line-height:17px;color:#d2d6dd;font-weight:bold;transform:scaleX(0.5504);transform-origin:0 0;">HOST</div>
<svg class="r" style="left:1253px;top:251px;" width="8" height="14" viewBox="0 0 8 14" fill="none"><path d="M4 0.5 L7.8 5.5 H0.2 Z M4 13.5 L7.8 8.5 H0.2 Z" fill="#bfc2c7"/></svg>
<svg class="r" style="left:1280px;top:253px;" width="6" height="9" viewBox="0 0 6 9" fill="none"><path d="M4.5 1 L1 4.5 L4.5 8" stroke="#65686e" stroke-width="1.2"/></svg>
<svg class="r" style="left:1292px;top:249px;" width="17" height="17" viewBox="0 0 17 17" fill="none"><rect x="1.5" y="2.5" width="14" height="13" stroke="#c3c6cc" stroke-width="1.2"/><path d="M1.5 6 H15.5" stroke="#c3c6cc" stroke-width="1.5"/><path d="M5 0.8 V4 M12 0.8 V4" stroke="#c3c6cc" stroke-width="1.2"/></svg>
<div class="t" style="left:1464px;top:249.61px;font-size:17px;line-height:17px;color:#d2d6dd;font-weight:bold;transform:scaleX(0.5543);transform-origin:0 0;">CREATED AT</div>
<svg class="r" style="left:1699px;top:251px;" width="8" height="14" viewBox="0 0 8 14" fill="none"><path d="M4 0.5 L7.8 5.5 H0.2 Z M4 13.5 L7.8 8.5 H0.2 Z" fill="#bfc2c7"/></svg>
<div class="t" style="left:1759px;top:247.61px;font-size:17px;line-height:17px;color:#d2d6dd;font-weight:bold;transform:scaleX(0.5620);transform-origin:0 0;">ACTIONS</div>
<div class="r" style="left:300px;top:303.86px;width:1544px;height:1px;background:#3a3c42"></div>
<div class="r" style="left:331px;top:280.00px;width:14px;height:14px;border:1px solid #46484d;border-radius:2px"></div>
<div class="t" style="left:472.6px;top:281.81px;font-size:12px;line-height:12px;color:#3fb5c1;font-family:'Liberation Mono',monospace;font-weight:normal;">4e30eefa-dee2-4f2b-bde9-aec368f04556</div>
<div class="t" style="left:833.3px;top:281.81px;font-size:12px;line-height:12px;color:#e6ae0b;font-family:'Liberation Mono',monospace;font-weight:normal;">google.abogado</div>
<div class="t" style="left:1300.7px;width:408px;text-align:right;top:281.81px;font-size:12px;line-height:12px;color:#ec4c95;font-family:'Liberation Mono',monospace">2022-01-14 Friday, 18:13:17</div>
<div class="r" style="left:1769px;top:276.00px;width:22px;height:22px;border:1px solid #46484d;border-radius:3px"></div>
<svg class="r" style="left:1775px;top:281px;" width="13" height="15" viewBox="0 0 13 15" fill="none"><path d="M8.8 1.3 L11.2 3.7 L4.6 10.3 L1.8 11 L2.5 8.2 Z" stroke="#c3c6cc" stroke-width="1.2" stroke-linejoin="round"/><path d="M0.8 12.7 H12.5" stroke="#c3c6cc" stroke-width="1.3"/></svg>
<div class="r" style="left:300px;top:334.71px;width:1544px;height:1px;background:#3a3c42"></div>
<div class="r" style="left:331px;top:310.86px;width:14px;height:14px;border:1px solid #46484d;border-radius:2px"></div>
<div class="t" style="left:472.6px;top:312.81px;font-size:12px;line-height:12px;color:#3fb5c1;font-family:'Liberation Mono',monospace;font-weight:normal;">bf237f05-f5c0-44ed-9b2e-4c56c24b7f55</div>
<div class="t" style="left:833.3px;top:312.81px;font-size:12px;line-height:12px;color:#e6ae0b;font-family:'Liberation Mono',monospace;font-weight:normal;">google.ac</div>
<div class="t" style="left:1300.7px;width:408px;text-align:right;top:312.81px;font-size:12px;line-height:12px;color:#ec4c95;font-family:'Liberation Mono',monospace">2022-01-14 Friday, 18:14:21</div>
<div class="r" style="left:1769px;top:306.86px;width:22px;height:22px;border:1px solid #46484d;border-radius:3px"></div>
<svg class="r" style="left:1775px;top:312px;" width="13" height="15" viewBox="0 0 13 15" fill="none"><path d="M8.8 1.3 L11.2 3.7 L4.6 10.3 L1.8 11 L2.5 8.2 Z" stroke="#c3c6cc" stroke-width="1.2" stroke-linejoin="round"/><path d="M0.8 12.7 H12.5" stroke="#c3c6cc" stroke-width="1.3"/></svg>
<div class="r" style="left:300px;top:365.57px;width:1544px;height:1px;background:#3a3c42"></div>
<div class="r" style="left:331px;top:341.71px;width:14px;height:14px;border:1px solid #46484d;border-radius:2px"></div>
<div class="t" style="left:472.6px;top:343.81px;font-size:12px;line-height:12px;color:#3fb5c1;font-family:'Liberation Mono',monospace;font-weight:normal;">f8e559a9-ce2a-4250-8d46-bd62ac278755</div>
<div class="t" style="left:833.3px;top:343.81px;font-size:12px;line-height:12px;color:#e6ae0b;font-family:'Liberation Mono',monospace;font-weight:normal;">googleapps.academy</div>
<div class="t" style="left:1300.7px;width:408px;text-align:right;top:343.81px;font-size:12px;line-height:12px;color:#ec4c95;font-family:'Liberation Mono',monospace">2022-01-14 Friday, 18:14:53</div>
<div class="r" style="left:1769px;top:337.71px;width:22px;height:22px;border:1px solid #46484d;border-radius:3px"></div>
<svg class="r" style="left:1775px;top:343px;" width="13" height="15" viewBox="0 0 13 15" fill="none"><path d="M8.8 1.3 L11.2 3.7 L4.6 10.3 L1.8 11 L2.5 8.2 Z" stroke="#c3c6cc" stroke-width="1.2" stroke-linejoin="round"/><path d="M0.8 12.7 H12.5" stroke="#c3c6cc" stroke-width="1.3"/></svg>
<div class="r" style="left:300px;top:396.43px;width:1544px;height:1px;background:#3a3c42"></div>
<div class="r" style="left:331px;top:372.57px;width:14px;height:14px;border:1px solid #46484d;border-radius:2px"></div>
<div class="t" style="left:472.6px;top:374.81px;font-size:12px;line-height:12px;color:#3fb5c1;font-family:'Liberation Mono',monospace;font-weight:normal;">78e04d42-4bc7-4594-99d1-5c5126e2a005</div>
<div class="t" style="left:833.3px;top:374.81px;font-size:12px;line-height:12px;color:#e6ae0b;font-family:'Liberation Mono',monospace;font-weight:normal;">googleanalytics.academy</div>
<div class="t" style="left:1300.7px;width:408px;text-align:right;top:374.81px;font-size:12px;line-height:12px;color:#ec4c95;font-family:'Liberation Mono',monospace">2022-01-14 Friday, 18:15:37</div>
<div class="r" style="left:1769px;top:368.57px;width:22px;height:22px;border:1px solid #46484d;border-radius:3px"></div>
<svg class="r" style="left:1775px;top:374px;" width="13" height="15" viewBox="0 0 13 15" fill="none"><path d="M8.8 1.3 L11.2 3.7 L4.6 10.3 L1.8 11 L2.5 8.2 Z" stroke="#c3c6cc" stroke-width="1.2" stroke-linejoin="round"/><path d="M0.8 12.7 H12.5" stroke="#c3c6cc" stroke-width="1.3"/></svg>
<div class="r" style="left:300px;top:427.29px;width:1544px;height:1px;background:#3a3c42"></div>
<div class="r" style="left:331px;top:403.43px;width:14px;height:14px;border:1px solid #46484d;border-radius:2px"></div>
<div class="t" style="left:472.6px;top:404.81px;font-size:12px;line-height:12px;color:#3fb5c1;font-family:'Liberation Mono',monospace;font-weight:normal;">2856b7c7-ac5e-4091-8a84-285b581da787</div>
<div class="t" style="left:833.3px;top:404.81px;font-size:12px;line-height:12px;color:#e6ae0b;font-family:'Liberation Mono',monospace;font-weight:normal;">googlesheets.academy</div>
<div class="t" style="left:1300.7px;width:408px;text-align:right;top:404.81px;font-size:12px;line-height:12px;color:#ec4c95;font-family:'Liberation Mono',monospace">2022-01-14 Friday, 18:15:37</div>
<div class="r" style="left:1769px;top:399.43px;width:22px;height:22px;border:1px solid #46484d;border-radius:3px"></div>
<svg class="r" style="left:1775px;top:404px;" width="13" height="15" viewBox="0 0 13 15" fill="none"><path d="M8.8 1.3 L11.2 3.7 L4.6 10.3 L1.8 11 L2.5 8.2 Z" stroke="#c3c6cc" stroke-width="1.2" stroke-linejoin="round"/><path d="M0.8 12.7 H12.5" stroke="#c3c6cc" stroke-width="1.3"/></svg>
<div class="r" style="left:300px;top:458.14px;width:1544px;height:1px;background:#3a3c42"></div>
<div class="r" style="left:331px;top:434.29px;width:14px;height:14px;border:1px solid #46484d;border-radius:2px"></div>
<div class="t" style="left:472.6px;top:435.81px;font-size:12px;line-height:12px;color:#3fb5c1;font-family:'Liberation Mono',monospace;font-weight:normal;">0140880e-34ab-4ca5-a38b-6ec0c71c19b4</div>
<div class="t" style="left:833.3px;top:435.81px;font-size:12px;line-height:12px;color:#e6ae0b;font-family:'Liberation Mono',monospace;font-weight:normal;">googleone.academy</div>
<div class="t" style="left:1300.7px;width:408px;text-align:right;top:435.81px;font-size:12px;line-height:12px;color:#ec4c95;font-family:'Liberation Mono',monospace">2022-01-14 Friday, 18:17:10</div>
<div class="r" style="left:1769px;top:430.29px;width:22px;height:22px;border:1px solid #46484d;border-radius:3px"></div>
<svg class="r" style="left:1775px;top:435px;" width="13" height="15" viewBox="0 0 13 15" fill="none"><path d="M8.8 1.3 L11.2 3.7 L4.6 10.3 L1.8 11 L2.5 8.2 Z" stroke="#c3c6cc" stroke-width="1.2" stroke-linejoin="round"/><path d="M0.8 12.7 H12.5" stroke="#c3c6cc" stroke-width="1.3"/></svg>
<div class="r" style="left:300px;top:489.00px;width:1544px;height:1px;background:#3a3c42"></div>
<div class="r" style="left:331px;top:465.14px;width:14px;height:14px;border:1px solid #46484d;border-radius:2px"></div>
<div class="t" style="left:472.6px;top:466.81px;font-size:12px;line-height:12px;color:#3fb5c1;font-family:'Liberation Mono',monospace;font-weight:normal;">6a04d33b-a943-4fd6-befc-7980987c682e</div>
<div class="t" style="left:833.3px;top:466.81px;font-size:12px;line-height:12px;color:#e6ae0b;font-family:'Liberation Mono',monospace;font-weight:normal;">googler.academy</div>
<div class="t" style="left:1300.7px;width:408px;text-align:right;top:466.81px;font-size:12px;line-height:12px;color:#ec4c95;font-family:'Liberation Mono',monospace">2022-01-14 Friday, 18:16:40</div>
<div class="r" style="left:1769px;top:461.14px;width:22px;height:22px;border:1px solid #46484d;border-radius:3px"></div>
<svg class="r" style="left:1775px;top:466px;" width="13" height="15" viewBox="0 0 13 15" fill="none"><path d="M8.8 1.3 L11.2 3.7 L4.6 10.3 L1.8 11 L2.5 8.2 Z" stroke="#c3c6cc" stroke-width="1.2" stroke-linejoin="round"/><path d="M0.8 12.7 H12.5" stroke="#c3c6cc" stroke-width="1.3"/></svg>
<div class="r" style="left:300px;top:519.86px;width:1544px;height:1px;background:#3a3c42"></div>
<div class="r" style="left:331px;top:496.00px;width:14px;height:14px;border:1px solid #46484d;border-radius:2px"></div>
<div class="t" style="left:472.6px;top:497.81px;font-size:12px;line-height:12px;color:#3fb5c1;font-family:'Liberation Mono',monospace;font-weight:normal;">7faf77ec-fbe9-4f59-87cd-141f12db226e</div>
<div class="t" style="left:833.3px;top:497.81px;font-size:12px;line-height:12px;color:#e6ae0b;font-family:'Liberation Mono',monospace;font-weight:normal;">googles.academy</div>
<div class="t" style="left:1300.7px;width:408px;text-align:right;top:497.81px;font-size:12px;line-height:12px;color:#ec4c95;font-family:'Liberation Mono',monospace">2022-01-14 Friday, 18:16:55</div>
<div class="r" style="left:1769px;top:492.00px;width:22px;height:22px;border:1px solid #46484d;border-radius:3px"></div>
<svg class="r" style="left:1775px;top:497px;" width="13" height="15" viewBox="0 0 13 15" fill="none"><path d="M8.8 1.3 L11.2 3.7 L4.6 10.3 L1.8 11 L2.5 8.2 Z" stroke="#c3c6cc" stroke-width="1.2" stroke-linejoin="round"/><path d="M0.8 12.7 H12.5" stroke="#c3c6cc" stroke-width="1.3"/></svg>
<div class="r" style="left:300px;top:550.71px;width:1544px;height:1px;background:#3a3c42"></div>
<div class="r" style="left:331px;top:526.86px;width:14px;height:14px;border:1px solid #46484d;border-radius:2px"></div>
<div class="t" style="left:472.6px;top:528.81px;font-size:12px;line-height:12px;color:#3fb5c1;font-family:'Liberation Mono',monospace;font-weight:normal;">e73a5ef7-bcb8-44f4-97a6-243a2badf5c9</div>
<div class="t" style="left:833.3px;top:528.81px;font-size:12px;line-height:12px;color:#e6ae0b;font-family:'Liberation Mono',monospace;font-weight:normal;">googleads.academy</div>
<div class="t" style="left:1300.7px;width:408px;text-align:right;top:528.81px;font-size:12px;line-height:12px;color:#ec4c95;font-family:'Liberation Mono',monospace">2022-01-14 Friday, 18:15:50</div>
<div class="r" style="left:1769px;top:522.86px;width:22px;height:22px;border:1px solid #46484d;border-radius:3px"></div>
<svg class="r" style="left:1775px;top:528px;" width="13" height="15" viewBox="0 0 13 15" fill="none"><path d="M8.8 1.3 L11.2 3.7 L4.6 10.3 L1.8 11 L2.5 8.2 Z" stroke="#c3c6cc" stroke-width="1.2" stroke-linejoin="round"/><path d="M0.8 12.7 H12.5" stroke="#c3c6cc" stroke-width="1.3"/></svg>
<div class="r" style="left:300px;top:581.57px;width:1544px;height:1px;background:#3a3c42"></div>
<div class="r" style="left:331px;top:557.71px;width:14px;height:14px;border:1px solid #46484d;border-radius:2px"></div>
<div class="t" style="left:472.6px;top:559.81px;font-size:12px;line-height:12px;color:#3fb5c1;font-family:'Liberation Mono',monospace;font-weight:normal;">a077265f-76c7-4ac6-84af-4e37e047f49e</div>
<div class="t" style="left:833.3px;top:559.81px;font-size:12px;line-height:12px;color:#e6ae0b;font-family:'Liberation Mono',monospace;font-weight:normal;">mygoogle.academy</div>
<div class="t" style="left:1300.7px;width:408px;text-align:right;top:559.81px;font-size:12px;line-height:12px;color:#ec4c95;font-family:'Liberation Mono',monospace">2022-01-14 Friday, 18:16:14</div>
<div class="r" style="left:1769px;top:553.71px;width:22px;height:22px;border:1px solid #46484d;border-radius:3px"></div>
<svg class="r" style="left:1775px;top:559px;" width="13" height="15" viewBox="0 0 13 15" fill="none"><path d="M8.8 1.3 L11.2 3.7 L4.6 10.3 L1.8 11 L2.5 8.2 Z" stroke="#c3c6cc" stroke-width="1.2" stroke-linejoin="round"/><path d="M0.8 12.7 H12.5" stroke="#c3c6cc" stroke-width="1.3"/></svg>
<div class="r" style="left:300px;top:612.43px;width:1544px;height:1px;background:#3a3c42"></div>
<div class="r" style="left:331px;top:588.57px;width:14px;height:14px;border:1px solid #46484d;border-radius:2px"></div>
<div class="t" style="left:472.6px;top:590.81px;font-size:12px;line-height:12px;color:#3fb5c1;font-family:'Liberation Mono',monospace;font-weight:normal;">18fa2ed7-5651-4ba8-bd85-feee869e2a34</div>
<div class="t" style="left:833.3px;top:590.81px;font-size:12px;line-height:12px;color:#e6ae0b;font-family:'Liberation Mono',monospace;font-weight:normal;">googleworld.academy</div>
<div class="t" style="left:1300.7px;width:408px;text-align:right;top:590.81px;font-size:12px;line-height:12px;color:#ec4c95;font-family:'Liberation Mono',monospace">2022-01-14 Friday, 18:16:30</div>
<div class="r" style="left:1769px;top:584.57px;width:22px;height:22px;border:1px solid #46484d;border-radius:3px"></div>
<svg class="r" style="left:1775px;top:590px;" width="13" height="15" viewBox="0 0 13 15" fill="none"><path d="M8.8 1.3 L11.2 3.7 L4.6 10.3 L1.8 11 L2.5 8.2 Z" stroke="#c3c6cc" stroke-width="1.2" stroke-linejoin="round"/><path d="M0.8 12.7 H12.5" stroke="#c3c6cc" stroke-width="1.3"/></svg>
<div class="r" style="left:300px;top:643.29px;width:1544px;height:1px;background:#3a3c42"></div>
<div class="r" style="left:331px;top:619.43px;width:14px;height:14px;border:1px solid #46484d;border-radius:2px"></div>
<div class="t" style="left:472.6px;top:620.81px;font-size:12px;line-height:12px;color:#3fb5c1;font-family:'Liberation Mono',monospace;font-weight:normal;">21554965-84d5-4958-bb22-b12ce9af0151</div>
<div class="t" style="left:833.3px;top:620.81px;font-size:12px;line-height:12px;color:#e6ae0b;font-family:'Liberation Mono',monospace;font-weight:normal;">google.adult</div>
<div class="t" style="left:1300.7px;width:408px;text-align:right;top:620.81px;font-size:12px;line-height:12px;color:#ec4c95;font-family:'Liberation Mono',monospace">2022-01-14 Friday, 18:18:09</div>
<div class="r" style="left:1769px;top:615.43px;width:22px;height:22px;border:1px solid #46484d;border-radius:3px"></div>
<svg class="r" style="left:1775px;top:620px;" width="13" height="15" viewBox="0 0 13 15" fill="none"><path d="M8.8 1.3 L11.2 3.7 L4.6 10.3 L1.8 11 L2.5 8.2 Z" stroke="#c3c6cc" stroke-width="1.2" stroke-linejoin="round"/><path d="M0.8 12.7 H12.5" stroke="#c3c6cc" stroke-width="1.3"/></svg>
<div class="r" style="left:300px;top:674.14px;width:1544px;height:1px;background:#3a3c42"></div>
<div class="r" style="left:331px;top:650.29px;width:14px;height:14px;border:1px solid #46484d;border-radius:2px"></div>
<div class="t" style="left:472.6px;top:651.81px;font-size:12px;line-height:12px;color:#3fb5c1;font-family:'Liberation Mono',monospace;font-weight:normal;">d9f214b3-236a-4a6e-9ed1-095f28bd5e55</div>
<div class="t" style="left:833.3px;top:651.81px;font-size:12px;line-height:12px;color:#e6ae0b;font-family:'Liberation Mono',monospace;font-weight:normal;">google.ad</div>
<div class="t" style="left:1300.7px;width:408px;text-align:right;top:651.81px;font-size:12px;line-height:12px;color:#ec4c95;font-family:'Liberation Mono',monospace">2022-01-14 Friday, 18:17:55</div>
<div class="r" style="left:1769px;top:646.29px;width:22px;height:22px;border:1px solid #46484d;border-radius:3px"></div>
<svg class="r" style="left:1775px;top:651px;" width="13" height="15" viewBox="0 0 13 15" fill="none"><path d="M8.8 1.3 L11.2 3.7 L4.6 10.3 L1.8 11 L2.5 8.2 Z" stroke="#c3c6cc" stroke-width="1.2" stroke-linejoin="round"/><path d="M0.8 12.7 H12.5" stroke="#c3c6cc" stroke-width="1.3"/></svg>
<div class="r" style="left:300px;top:705.00px;width:1544px;height:1px;background:#3a3c42"></div>
<div class="r" style="left:331px;top:681.14px;width:14px;height:14px;border:1px solid #46484d;border-radius:2px"></div>
<div class="t" style="left:472.6px;top:682.81px;font-size:12px;line-height:12px;color:#3fb5c1;font-family:'Liberation Mono',monospace;font-weight:normal;">127d3b5d-f5b8-435f-b912-c6e646ac41aa</div>
<div class="t" style="left:833.3px;top:682.81px;font-size:12px;line-height:12px;color:#e6ae0b;font-family:'Liberation Mono',monospace;font-weight:normal;">gigoogler.africa</div>
<div class="t" style="left:1300.7px;width:408px;text-align:right;top:682.81px;font-size:12px;line-height:12px;color:#ec4c95;font-family:'Liberation Mono',monospace">2022-01-14 Friday, 18:22:16</div>
<div class="r" style="left:1769px;top:677.14px;width:22px;height:22px;border:1px solid #46484d;border-radius:3px"></div>
<svg class="r" style="left:1775px;top:682px;" width="13" height="15" viewBox="0 0 13 15" fill="none"><path d="M8.8 1.3 L11.2 3.7 L4.6 10.3 L1.8 11 L2.5 8.2 Z" stroke="#c3c6cc" stroke-width="1.2" stroke-linejoin="round"/><path d="M0.8 12.7 H12.5" stroke="#c3c6cc" stroke-width="1.3"/></svg>
<div class="r" style="left:300px;top:735.86px;width:1544px;height:1px;background:#3a3c42"></div>
<div class="r" style="left:331px;top:712.00px;width:14px;height:14px;border:1px solid #46484d;border-radius:2px"></div>
<div class="t" style="left:472.6px;top:713.81px;font-size:12px;line-height:12px;color:#3fb5c1;font-family:'Liberation Mono',monospace;font-weight:normal;">f813cf8a-387c-4721-9812-87052163d742</div>
<div class="t" style="left:833.3px;top:713.81px;font-size:12px;line-height:12px;color:#e6ae0b;font-family:'Liberation Mono',monospace;font-weight:normal;">google.africa</div>
<div class="t" style="left:1300.7px;width:408px;text-align:right;top:713.81px;font-size:12px;line-height:12px;color:#ec4c95;font-family:'Liberation Mono',monospace">2022-01-14 Friday, 18:20:52</div>
<div class="r" style="left:1769px;top:708.00px;width:22px;height:22px;border:1px solid #46484d;border-radius:3px"></div>
<svg class="r" style="left:1775px;top:713px;" width="13" height="15" viewBox="0 0 13 15" fill="none"><path d="M8.8 1.3 L11.2 3.7 L4.6 10.3 L1.8 11 L2.5 8.2 Z" stroke="#c3c6cc" stroke-width="1.2" stroke-linejoin="round"/><path d="M0.8 12.7 H12.5" stroke="#c3c6cc" stroke-width="1.3"/></svg>
<div class="r" style="left:300px;top:766.71px;width:1544px;height:1px;background:#3a3c42"></div>
<div class="r" style="left:331px;top:742.86px;width:14px;height:14px;border:1px solid #46484d;border-radius:2px"></div>
<div class="t" style="left:472.6px;top:744.81px;font-size:12px;line-height:12px;color:#3fb5c1;font-family:'Liberation Mono',monospace;font-weight:normal;">57f94e6d-a284-4aa1-a9b8-aa140027e2eb</div>
<div class="t" style="left:833.3px;top:744.81px;font-size:12px;line-height:12px;color:#e6ae0b;font-family:'Liberation Mono',monospace;font-weight:normal;">google-seo.agency</div>
<div class="t" style="left:1300.7px;width:408px;text-align:right;top:744.81px;font-size:12px;line-height:12px;color:#ec4c95;font-family:'Liberation Mono',monospace">2022-01-14 Friday, 18:23:31</div>
<div class="r" style="left:1769px;top:738.86px;width:22px;height:22px;border:1px solid #46484d;border-radius:3px"></div>
<svg class="r" style="left:1775px;top:744px;" width="13" height="15" viewBox="0 0 13 15" fill="none"><path d="M8.8 1.3 L11.2 3.7 L4.6 10.3 L1.8 11 L2.5 8.2 Z" stroke="#c3c6cc" stroke-width="1.2" stroke-linejoin="round"/><path d="M0.8 12.7 H12.5" stroke="#c3c6cc" stroke-width="1.3"/></svg>
<div class="r" style="left:300px;top:797.57px;width:1544px;height:1px;background:#3a3c42"></div>
<div class="r" style="left:331px;top:773.71px;width:14px;height:14px;border:1px solid #46484d;border-radius:2px"></div>
<div class="t" style="left:472.6px;top:775.81px;font-size:12px;line-height:12px;color:#3fb5c1;font-family:'Liberation Mono',monospace;font-weight:normal;">ff8650c7-8c5a-4c58-bded-a2cd2e50c867</div>
<div class="t" style="left:833.3px;top:775.81px;font-size:12px;line-height:12px;color:#e6ae0b;font-family:'Liberation Mono',monospace;font-weight:normal;">google.com.ag</div>
<div class="t" style="left:1300.7px;width:408px;text-align:right;top:775.81px;font-size:12px;line-height:12px;color:#ec4c95;font-family:'Liberation Mono',monospace">2022-01-14 Friday, 18:22:40</div>
<div class="r" style="left:1769px;top:769.71px;width:22px;height:22px;border:1px solid #46484d;border-radius:3px"></div>
<svg class="r" style="left:1775px;top:775px;" width="13" height="15" viewBox="0 0 13 15" fill="none"><path d="M8.8 1.3 L11.2 3.7 L4.6 10.3 L1.8 11 L2.5 8.2 Z" stroke="#c3c6cc" stroke-width="1.2" stroke-linejoin="round"/><path d="M0.8 12.7 H12.5" stroke="#c3c6cc" stroke-width="1.3"/></svg>
<div class="r" style="left:300px;top:828.43px;width:1544px;height:1px;background:#3a3c42"></div>
<div class="r" style="left:331px;top:804.57px;width:14px;height:14px;border:1px solid #46484d;border-radius:2px"></div>
<div class="t" style="left:472.6px;top:806.81px;font-size:12px;line-height:12px;color:#3fb5c1;font-family:'Liberation Mono',monospace;font-weight:normal;">8ede7b83-8eb7-4cd8-9dbc-6a86319ebbdc</div>
<div class="t" style="left:833.3px;top:806.81px;font-size:12px;line-height:12px;color:#e6ae0b;font-family:'Liberation Mono',monospace;font-weight:normal;">atlantagoogle.agency</div>
<div class="t" style="left:1300.7px;width:408px;text-align:right;top:806.81px;font-size:12px;line-height:12px;color:#ec4c95;font-family:'Liberation Mono',monospace">2022-01-14 Friday, 18:23:02</div>
<div class="r" style="left:1769px;top:800.57px;width:22px;height:22px;border:1px solid #46484d;border-radius:3px"></div>
<svg class="r" style="left:1775px;top:806px;" width="13" height="15" viewBox="0 0 13 15" fill="none"><path d="M8.8 1.3 L11.2 3.7 L4.6 10.3 L1.8 11 L2.5 8.2 Z" stroke="#c3c6cc" stroke-width="1.2" stroke-linejoin="round"/><path d="M0.8 12.7 H12.5" stroke="#c3c6cc" stroke-width="1.3"/></svg>
<div class="r" style="left:300px;top:859.29px;width:1544px;height:1px;background:#3a3c42"></div>
<div class="r" style="left:331px;top:835.43px;width:14px;height:14px;border:1px solid #46484d;border-radius:2px"></div>
<div class="t" style="left:472.6px;top:836.81px;font-size:12px;line-height:12px;color:#3fb5c1;font-family:'Liberation Mono',monospace;font-weight:normal;">363bc2a4-79a8-421c-b15b-06e7362cc1fa</div>
<div class="t" style="left:833.3px;top:836.81px;font-size:12px;line-height:12px;color:#e6ae0b;font-family:'Liberation Mono',monospace;font-weight:normal;">googleads.agency</div>
<div class="t" style="left:1300.7px;width:408px;text-align:right;top:836.81px;font-size:12px;line-height:12px;color:#ec4c95;font-family:'Liberation Mono',monospace">2022-01-14 Friday, 18:23:31</div>
<div class="r" style="left:1769px;top:831.43px;width:22px;height:22px;border:1px solid #46484d;border-radius:3px"></div>
<svg class="r" style="left:1775px;top:836px;" width="13" height="15" viewBox="0 0 13 15" fill="none"><path d="M8.8 1.3 L11.2 3.7 L4.6 10.3 L1.8 11 L2.5 8.2 Z" stroke="#c3c6cc" stroke-width="1.2" stroke-linejoin="round"/><path d="M0.8 12.7 H12.5" stroke="#c3c6cc" stroke-width="1.3"/></svg>
<div class="r" style="left:331px;top:866.29px;width:14px;height:14px;border:1px solid #46484d;border-radius:2px"></div>
<div class="t" style="left:472.6px;top:867.81px;font-size:12px;line-height:12px;color:#3fb5c1;font-family:'Liberation Mono',monospace;font-weight:normal;">5025fb1c-61ec-4173-8525-a977413f4ba9</div>
<div class="t" style="left:833.3px;top:867.81px;font-size:12px;line-height:12px;color:#e6ae0b;font-family:'Liberation Mono',monospace;font-weight:normal;">googlecertified.agency</div>
<div class="t" style="left:1300.7px;width:408px;text-align:right;top:867.81px;font-size:12px;line-height:12px;color:#ec4c95;font-family:'Liberation Mono',monospace">2022-01-14 Friday, 18:23:31</div>
<div class="r" style="left:1769px;top:862.29px;width:22px;height:22px;border:1px solid #46484d;border-radius:3px"></div>
<svg class="r" style="left:1775px;top:867px;" width="13" height="15" viewBox="0 0 13 15" fill="none"><path d="M8.8 1.3 L11.2 3.7 L4.6 10.3 L1.8 11 L2.5 8.2 Z" stroke="#c3c6cc" stroke-width="1.2" stroke-linejoin="round"/><path d="M0.8 12.7 H12.5" stroke="#c3c6cc" stroke-width="1.3"/></svg>
</body></html>
